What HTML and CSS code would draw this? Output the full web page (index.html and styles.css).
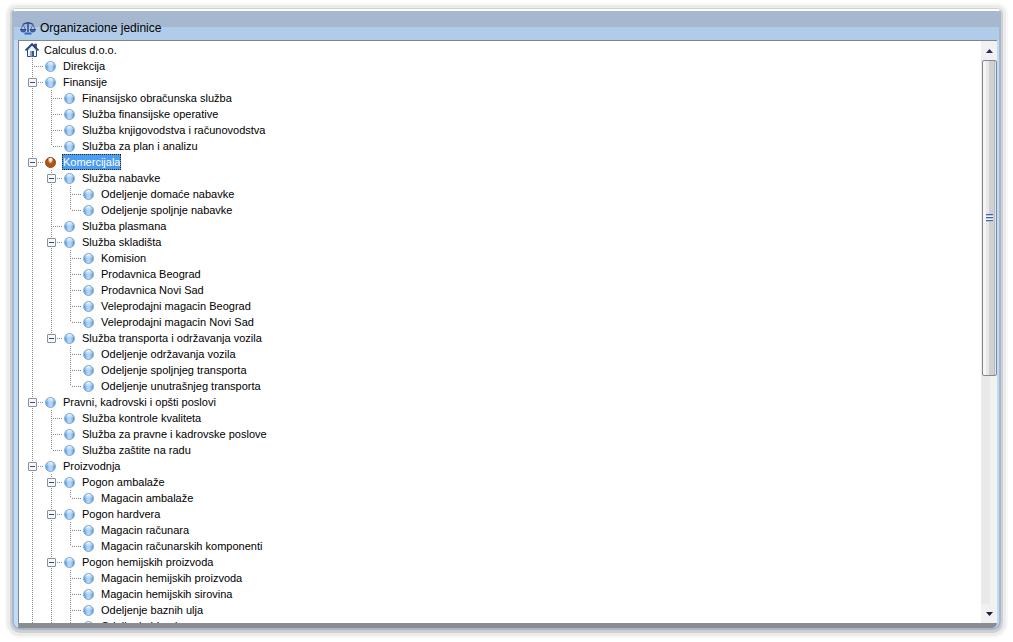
FILE: index.html
```html
<!DOCTYPE html>
<html lang="sr-Latn">
<head>
    <meta charset="UTF-8">
    <meta name="viewport" content="width=device-width, initial-scale=1.0">
    <title>Organizacione jedinice</title>
    <link rel="stylesheet" href="styles.css">
</head>
<body>
    <div class="window">
        <header class="titlebar">
            <svg class="scales" width="16" height="14" viewBox="0 0 16 14" fill="none" stroke="#2c4a8c">
                <path d="M8 1v10M3 3.5q2.500-2 5-1.500q2.500-.5 5 1.500" stroke-width="1.500"/>
                <path d="M3 3.500L1 8.500M3 3.500L5.500 8.500M13 3.500L10.500 8.500M13 3.500L15 8.500" stroke="#5570a8"/>
                <path d="M.5 8.500h5.500q-.5 2.500-2.800 2.500t-2.700-2.500zM10 8.500h5.500q-.5 2.500-2.800 2.500t-2.700-2.500z" fill="#4a68ad"/>
                <path d="M4.500 12.500h7" stroke="#2f62c4" stroke-width="2"/>
            </svg>
            <h1>Organizacione jedinice</h1>
        </header>
        <div class="panel">
            <div class="tree">
                <div class="root">
                    <svg width="14" height="14" viewBox="0 0 14 14">
                        <path d="M9.500 1h2v4h-2z" fill="#a33" stroke="#234a8e" stroke-width=".8"/>
                        <path d="M2.500 7v6.500h9V7L7 2z" fill="#f2f6fc" stroke="#234a8e"/>
                        <path d="M.5 7.500L7 1l6.500 6.500" fill="none" stroke="#1d4489" stroke-width="1.600"/>
                        <path d="M5 8h4v5.500H5z" fill="#8aa4ce"/>
                        <path d="M7 8h2v5.500H7z" fill="#35589b"/>
                    </svg>
                    <span class="name">Calculus d.o.o.</span>
                </div>
                <ul>
                    <li><div class="row"><i class="ball"></i><span class="name">Direkcija</span></div></li>
                    <li>
                        <div class="row"><button class="toggle" aria-label="Finansije"></button><i class="ball"></i><span class="name">Finansije</span></div>
                        <ul>
                            <li><div class="row"><i class="ball"></i><span class="name">Finansijsko obračunska služba</span></div></li>
                            <li><div class="row"><i class="ball"></i><span class="name">Služba finansijske operative</span></div></li>
                            <li><div class="row"><i class="ball"></i><span class="name">Služba knjigovodstva i računovodstva</span></div></li>
                            <li><div class="row"><i class="ball"></i><span class="name">Služba za plan i analizu</span></div></li>
                        </ul>
                    </li>
                    <li>
                        <div class="row selected"><button class="toggle" aria-label="Komercijala"></button><i class="ball"></i><span class="name">Komercijala</span></div>
                        <ul>
                            <li>
                                <div class="row"><button class="toggle" aria-label="Služba nabavke"></button><i class="ball"></i><span class="name">Služba nabavke</span></div>
                                <ul>
                                    <li><div class="row"><i class="ball"></i><span class="name">Odeljenje domaće nabavke</span></div></li>
                                    <li><div class="row"><i class="ball"></i><span class="name">Odeljenje spoljnje nabavke</span></div></li>
                                </ul>
                            </li>
                            <li><div class="row"><i class="ball"></i><span class="name">Služba plasmana</span></div></li>
                            <li>
                                <div class="row"><button class="toggle" aria-label="Služba skladišta"></button><i class="ball"></i><span class="name">Služba skladišta</span></div>
                                <ul>
                                    <li><div class="row"><i class="ball"></i><span class="name">Komision</span></div></li>
                                    <li><div class="row"><i class="ball"></i><span class="name">Prodavnica Beograd</span></div></li>
                                    <li><div class="row"><i class="ball"></i><span class="name">Prodavnica Novi Sad</span></div></li>
                                    <li><div class="row"><i class="ball"></i><span class="name">Veleprodajni magacin Beograd</span></div></li>
                                    <li><div class="row"><i class="ball"></i><span class="name">Veleprodajni magacin Novi Sad</span></div></li>
                                </ul>
                            </li>
                            <li>
                                <div class="row"><button class="toggle" aria-label="Služba transporta i održavanja vozila"></button><i class="ball"></i><span class="name">Služba transporta i održavanja vozila</span></div>
                                <ul>
                                    <li><div class="row"><i class="ball"></i><span class="name">Odeljenje održavanja vozila</span></div></li>
                                    <li><div class="row"><i class="ball"></i><span class="name">Odeljenje spoljnjeg transporta</span></div></li>
                                    <li><div class="row"><i class="ball"></i><span class="name">Odeljenje unutrašnjeg transporta</span></div></li>
                                </ul>
                            </li>
                        </ul>
                    </li>
                    <li>
                        <div class="row"><button class="toggle" aria-label="Pravni, kadrovski i opšti poslovi"></button><i class="ball"></i><span class="name">Pravni, kadrovski i opšti poslovi</span></div>
                        <ul>
                            <li><div class="row"><i class="ball"></i><span class="name">Služba kontrole kvaliteta</span></div></li>
                            <li><div class="row"><i class="ball"></i><span class="name">Služba za pravne i kadrovske poslove</span></div></li>
                            <li><div class="row"><i class="ball"></i><span class="name">Služba zaštite na radu</span></div></li>
                        </ul>
                    </li>
                    <li class="open-end">
                        <div class="row"><button class="toggle" aria-label="Proizvodnja"></button><i class="ball"></i><span class="name">Proizvodnja</span></div>
                        <ul>
                            <li>
                                <div class="row"><button class="toggle" aria-label="Pogon ambalaže"></button><i class="ball"></i><span class="name">Pogon ambalaže</span></div>
                                <ul>
                                    <li><div class="row"><i class="ball"></i><span class="name">Magacin ambalaže</span></div></li>
                                </ul>
                            </li>
                            <li>
                                <div class="row"><button class="toggle" aria-label="Pogon hardvera"></button><i class="ball"></i><span class="name">Pogon hardvera</span></div>
                                <ul>
                                    <li><div class="row"><i class="ball"></i><span class="name">Magacin računara</span></div></li>
                                    <li><div class="row"><i class="ball"></i><span class="name">Magacin računarskih komponenti</span></div></li>
                                </ul>
                            </li>
                            <li class="open-end">
                                <div class="row"><button class="toggle" aria-label="Pogon hemijskih proizvoda"></button><i class="ball"></i><span class="name">Pogon hemijskih proizvoda</span></div>
                                <ul>
                                    <li><div class="row"><i class="ball"></i><span class="name">Magacin hemijskih proizvoda</span></div></li>
                                    <li><div class="row"><i class="ball"></i><span class="name">Magacin hemijskih sirovina</span></div></li>
                                    <li><div class="row"><i class="ball"></i><span class="name">Odeljenje baznih ulja</span></div></li>
                                    <li><div class="row"><i class="ball"></i><span class="name">Odeljenje blenda</span></div></li>
                                </ul>
                            </li>
                        </ul>
                    </li>
                </ul>
            </div>
            <div class="scrollbar">
                <button class="arrow" aria-label="Gore"><svg width="7" height="4" viewBox="0 0 7 4"><path d="M0 4L3.500 0L7 4z" fill="#2b2b6b"/></svg></button>
                <div class="track"><div class="thumb"><i class="grip"></i></div></div>
                <button class="arrow" aria-label="Dole"><svg width="7" height="4" viewBox="0 0 7 4"><path d="M0 0h7L3.500 4z" fill="#1c1c44"/></svg></button>
            </div>
        </div>
    </div>
</body>
</html>
```
FILE: styles.css
```css
* {
    box-sizing: border-box;
}
body {
    margin: 0;
    height: 100vh;
    padding: 9px 12px 12px;
    background: #fff;
    font-family: Tahoma, "Liberation Sans", sans-serif;
    font-size: 11px;
    color: #000;
    overflow: hidden;
}
.window {
    display: flex;
    flex-direction: column;
    height: 100%;
    padding: 0 2px 0 4px;
    background: linear-gradient(#a5b8d0 16px, #b1cce9 16px, #b1cce9 29px, #c2dbf4 29px);
    border: 2px solid #a5b8d0;
    border-top-color: #fff;
    border-radius: 4px 4px 8px 8px;
    box-shadow: 0 1px 0 2px #d0d0d0, 0 1px 0 5px #ececec, 0 1px 0 7px #f8f8f8;
}
.titlebar {
    display: flex;
    align-items: center;
    gap: 4px;
    height: 29px;
    padding: 4px 2px 0;
    flex-shrink: 0;
}
h1 {
    margin: 0;
    font-size: 12px;
    font-weight: normal;
}
.panel {
    display: flex;
    flex: 1;
    min-height: 0;
    background: #fff;
    border-top: 1px solid #82868c;
    border-left: 1px solid #82868c;
    border-bottom: 5px solid #8a8c90;
    border-bottom-right-radius: 5px;
}
.tree {
    flex: 1;
    padding: 1px 0 0 4px;
    overflow: hidden;
}
.tree ul {
    margin: 0;
    padding: 0;
    list-style: none;
}
.tree li ul {
    padding-left: 19px;
}
.tree li {
    background: repeating-linear-gradient(#888 0 1px, #fff 1px 2px) 9px 0 / 1px 100% no-repeat;
}
.tree li:last-child {
    background-size: 1px 8px;
}
.tree li.open-end {
    background-size: 1px 100%;
}
.root {
    display: flex;
    align-items: center;
    gap: 4px;
    height: 16px;
    padding-left: 2px;
}
.row {
    display: flex;
    align-items: center;
    height: 16px;
    padding-left: 22px;
    background: repeating-linear-gradient(90deg, #888 0 1px, #fff 1px 2px) 11px 8px / 9px 1px no-repeat;
}
.toggle {
    width: 9px;
    height: 9px;
    margin: 1px 8px 0 -17px;
    padding: 0;
    border: 1px solid #8a8f98;
    border-radius: 1px;
    background: linear-gradient(#2a4a9c, #2a4a9c) center / 5px 1px no-repeat #f8f8f8;
}
.ball {
    width: 11px;
    height: 11px;
    margin-right: 6px;
    border: 1px solid #7aa6d6;
    border-radius: 50%;
    background: linear-gradient(rgba(255, 255, 255, .7), rgba(255, 255, 255, 0) 50%), linear-gradient(90deg, #4a9bea, #b4d3f2 35%, #b4d3f2 65%, #4a9bea);
}
.name {
    height: 16px;
    padding: 0 1px;
    line-height: 17px;
    white-space: nowrap;
}
.selected .ball {
    border-color: #99481a;
    background: radial-gradient(ellipse at 50% 10%, #fff 15%, rgba(255, 255, 255, 0) 45%), #b2520f;
}
.selected .name {
    color: #fff;
    background: #4a9df0;
    outline: 1px dotted #3a2010;
    outline-offset: -1px;
}
.scrollbar {
    display: flex;
    flex-direction: column;
    width: 16px;
    background: linear-gradient(90deg, #e9e9e9 9px, #f2f2f0 9px);
}
.arrow {
    display: flex;
    align-items: center;
    justify-content: center;
    height: 19px;
    padding: 0;
    border: 0;
    background: #f1f1f1;
}
.track {
    flex: 1;
}
.thumb {
    display: flex;
    align-items: center;
    justify-content: center;
    height: 58%;
    margin-left: 1px;
    border: 1px solid #85878c;
    border-radius: 2px;
    background: linear-gradient(90deg, #f5f5f5 3px, #e8e8e8 3px, #e8e8e8 6px, #d0d0d0 6px, #d0d0d0 11px, #a9bfd4 11px, #a9bfd4 12px, #e0e6ec 12px);
}
.grip {
    width: 7px;
    height: 8px;
    background: repeating-linear-gradient(#4563a0 0 1px, #b8c8e4 1px 2px, #f4f4f4 2px 3px);
}
```
